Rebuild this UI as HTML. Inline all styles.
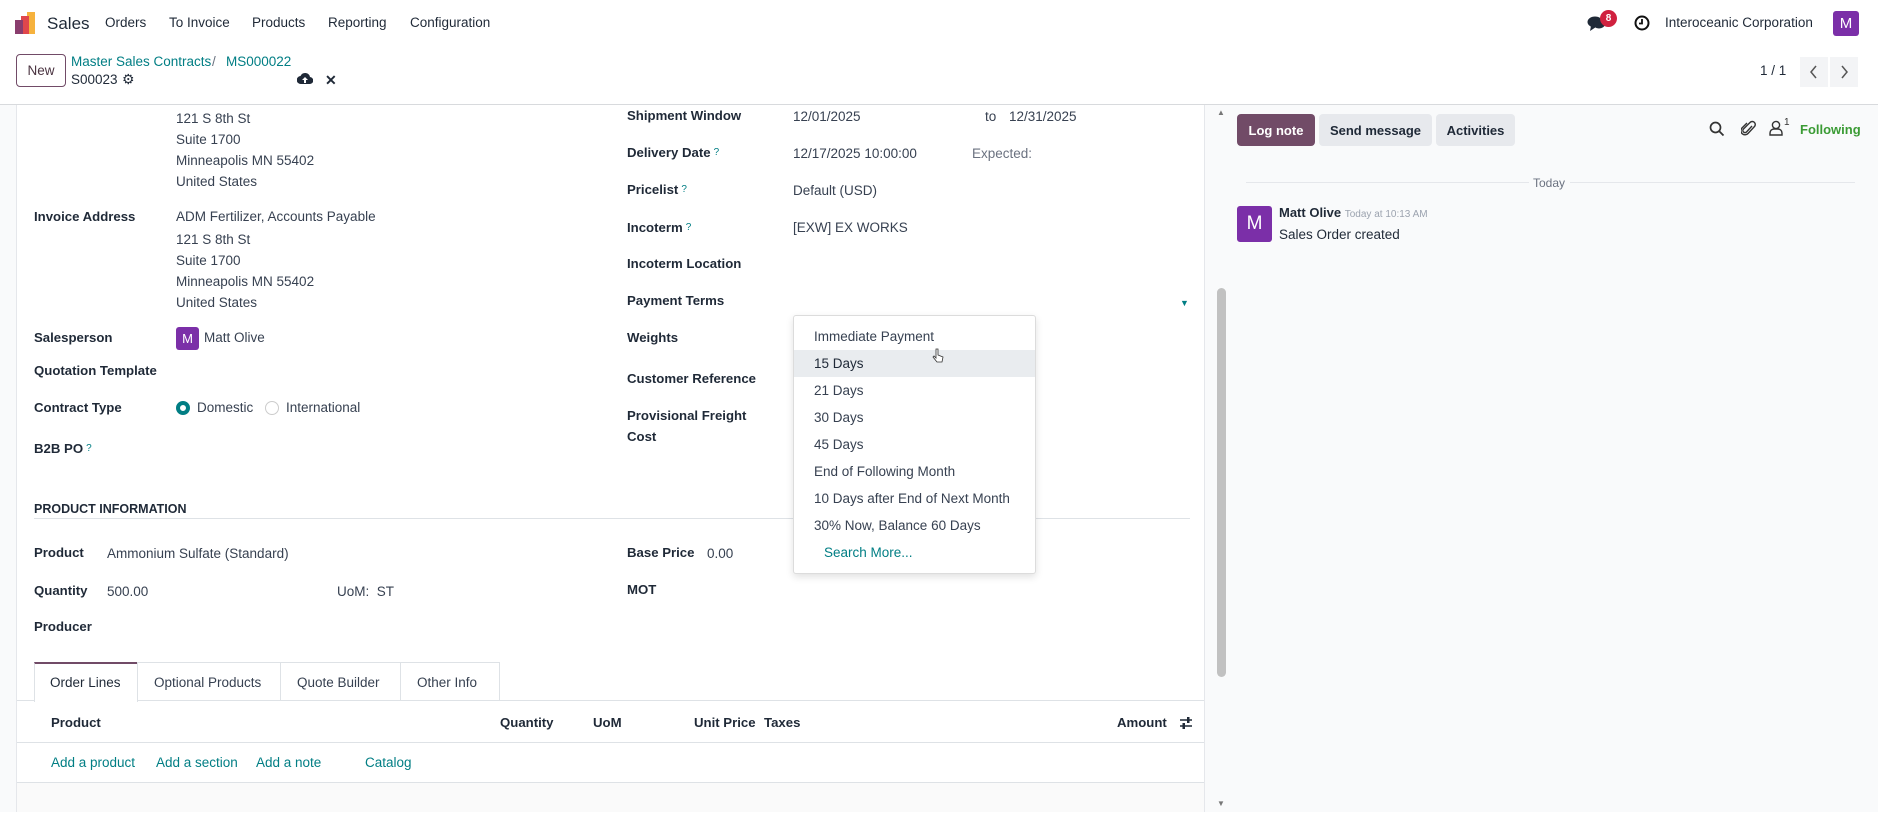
<!DOCTYPE html>
<html><head><meta charset="utf-8"><style>
*{margin:0;padding:0;box-sizing:border-box}
body{width:1878px;height:812px;overflow:hidden;background:#fff;font-family:"Liberation Sans",sans-serif;font-size:13.5px;color:#374151;position:relative}
.t{position:absolute;white-space:nowrap;line-height:18px;transform:translateY(-50%)}
.b{font-weight:bold;color:#1f2937;font-size:13.2px}
.l{color:#017e84}
.q{font-size:10px;color:#017e84;vertical-align:top;margin-left:3px;font-weight:normal}
.abs{position:absolute}
.btn{position:absolute;border-radius:4px;font-size:13.5px;display:flex;align-items:center;justify-content:center}
</style></head><body>
<!-- navbar -->
<svg class="abs" style="left:14px;top:12px" width="22" height="23" viewBox="0 0 22 23"><rect x="13" y="0" width="8" height="22" fill="#f6b23d"/><rect x="7" y="4" width="8" height="18" fill="#e0474c"/><rect x="1" y="8" width="8" height="14" fill="#8a3d6e"/></svg>
<div class="t" style="left:47px;top:24px;font-size:17px;color:#1f2937">Sales</div>
<div class="t" style="left:105px;top:23px;color:#1f2937">Orders</div>
<div class="t" style="left:169px;top:23px;color:#1f2937">To Invoice</div>
<div class="t" style="left:252px;top:23px;color:#1f2937">Products</div>
<div class="t" style="left:328px;top:23px;color:#1f2937">Reporting</div>
<div class="t" style="left:410px;top:23px;color:#1f2937">Configuration</div>
<svg class="abs" style="left:1587px;top:14px" width="20" height="18" viewBox="0 0 20 18"><ellipse cx="8" cy="8" rx="7.5" ry="5.5" fill="#1f2937"/><path d="M4 12 L3 17 L9 13Z" fill="#1f2937"/><ellipse cx="12" cy="10" rx="6" ry="4.5" fill="#1f2937"/></svg>
<div class="abs" style="left:1600px;top:10px;width:17px;height:17px;border-radius:50%;background:#d0213f;color:#fff;font-size:10px;font-weight:bold;text-align:center;line-height:17px">8</div>
<svg class="abs" style="left:1634px;top:15px" width="16" height="16" viewBox="0 0 16 16"><circle cx="8" cy="8" r="6.5" fill="none" stroke="#111" stroke-width="2"/><path d="M8 4v4.5h-3" fill="none" stroke="#111" stroke-width="1.8"/></svg>
<div class="t" style="left:1665px;top:23px;color:#1f2937">Interoceanic Corporation</div>
<div class="abs" style="left:1833px;top:11px;width:26px;height:25px;background:#7b2fa8;border-radius:3px;color:#fff;text-align:center;line-height:25px;font-size:15px">M</div>
<!-- control panel -->
<div class="btn" style="left:16px;top:54px;width:50px;height:33px;border:1px solid #714b67;color:#4a3340">New</div>
<div class="t l" style="left:71px;top:62px">Master Sales Contracts</div>
<div class="t" style="left:212px;top:62px;color:#6b7280">/</div>
<div class="t l" style="left:226px;top:62px">MS000022</div>
<div class="t" style="left:71px;top:80px;color:#1f2937">S00023</div>
<div class="t" style="left:122px;top:79px;font-size:14px;color:#1f2937">⚙</div>
<svg class="abs" style="left:297px;top:72px" width="16" height="13" viewBox="0 0 16 13"><path d="M4 12 a4 4 0 0 1 -0.5-8 a5 5 0 0 1 9.5 1 a3.5 3.5 0 0 1 -0.5 7Z" fill="#1f2937"/><path d="M8 5 l-3 3h2v3h2v-3h2Z" fill="#fff"/></svg>
<div class="t" style="left:325px;top:80px;font-size:14px;font-weight:bold;color:#1f2937">✕</div>
<div class="t" style="left:1760px;top:71px;color:#1f2937">1 / 1</div>
<div class="abs" style="left:1800px;top:57px;width:28px;height:30px;background:#f3f4f6"></div>
<div class="abs" style="left:1830px;top:57px;width:28px;height:30px;background:#f3f4f6"></div>
<svg class="abs" style="left:1808px;top:64px" width="12" height="16"><path d="M8 2 L3 8 L8 14" fill="none" stroke="#555" stroke-width="1.5"/></svg>
<svg class="abs" style="left:1838px;top:64px" width="12" height="16"><path d="M4 2 L9 8 L4 14" fill="none" stroke="#555" stroke-width="1.5"/></svg>
<div class="abs" style="left:0;top:104px;width:1878px;height:1px;background:#d8dadd"></div>
<!-- form area bg -->
<div class="abs" style="left:0;top:105px;width:17px;height:707px;background:#f9fafb"></div>
<div class="abs" style="left:16px;top:105px;width:1px;height:707px;background:#e5e7eb"></div>
<div class="abs" style="left:1204px;top:105px;width:1px;height:707px;background:#e5e7eb"></div>
<div class="abs" style="left:1205px;top:105px;width:673px;height:707px;background:#f9fafb"></div>
<!-- scrollbar -->
<div class="abs" style="left:1217px;top:288px;width:9px;height:389px;background:#c1c1c1;border-radius:5px"></div>
<div class="t" style="left:1217px;top:113px;font-size:8px;color:#777">▲</div>
<div class="t" style="left:1217px;top:804px;font-size:8px;color:#777">▼</div>
<!-- left column -->
<div class="t" style="left:176px;top:119px">121 S 8th St</div>
<div class="t" style="left:176px;top:140px">Suite 1700</div>
<div class="t" style="left:176px;top:161px">Minneapolis MN 55402</div>
<div class="t" style="left:176px;top:182px">United States</div>
<div class="t b" style="left:34px;top:217px">Invoice Address</div>
<div class="t" style="left:176px;top:217px">ADM Fertilizer, Accounts Payable</div>
<div class="t" style="left:176px;top:240px">121 S 8th St</div>
<div class="t" style="left:176px;top:261px">Suite 1700</div>
<div class="t" style="left:176px;top:282px">Minneapolis MN 55402</div>
<div class="t" style="left:176px;top:303px">United States</div>
<div class="t b" style="left:34px;top:338px">Salesperson</div>
<div class="abs" style="left:176px;top:327px;width:23px;height:23px;background:#7b2fa8;border-radius:3px;color:#fff;text-align:center;line-height:23px;font-size:13px">M</div>
<div class="t" style="left:204px;top:338px">Matt Olive</div>
<div class="t b" style="left:34px;top:371px">Quotation Template</div>
<div class="t b" style="left:34px;top:408px">Contract Type</div>
<div class="abs" style="left:176px;top:401px;width:14px;height:14px;border-radius:50%;border:4px solid #017e84;background:#fff"></div>
<div class="t" style="left:197px;top:408px">Domestic</div>
<div class="abs" style="left:265px;top:401px;width:14px;height:14px;border-radius:50%;border:1px solid #ccc;background:#fff"></div>
<div class="t" style="left:286px;top:408px">International</div>
<div class="t b" style="left:34px;top:449px">B2B PO<span class="q">?</span></div>
<!-- right column -->
<div class="t b" style="left:627px;top:116px">Shipment Window</div>
<div class="t" style="left:793px;top:117px">12/01/2025</div>
<div class="t" style="left:985px;top:117px">to</div>
<div class="t" style="left:1009px;top:117px">12/31/2025</div>
<div class="t b" style="left:627px;top:153px">Delivery Date<span class="q">?</span></div>
<div class="t" style="left:793px;top:154px">12/17/2025 10:00:00</div>
<div class="t" style="left:972px;top:154px;color:#6b7280">Expected:</div>
<div class="t b" style="left:627px;top:190px">Pricelist<span class="q">?</span></div>
<div class="t" style="left:793px;top:191px">Default (USD)</div>
<div class="t b" style="left:627px;top:228px">Incoterm<span class="q">?</span></div>
<div class="t" style="left:793px;top:228px">[EXW] EX WORKS</div>
<div class="t b" style="left:627px;top:264px">Incoterm Location</div>
<div class="t b" style="left:627px;top:301px">Payment Terms</div>
<div class="t" style="left:1180px;top:303px;font-size:9px;color:#017e84">▼</div>
<div class="t b" style="left:627px;top:338px">Weights</div>
<div class="t b" style="left:627px;top:379px">Customer Reference</div>
<div class="t b" style="left:627px;top:416px">Provisional Freight</div>
<div class="t b" style="left:627px;top:437px">Cost</div>
<!-- product info -->
<div class="t b" style="left:34px;top:509px;font-size:12.5px">PRODUCT INFORMATION</div>
<div class="abs" style="left:34px;top:518px;width:1156px;height:1px;background:#dee2e6"></div>
<div class="t b" style="left:34px;top:553px">Product</div>
<div class="t" style="left:107px;top:554px">Ammonium Sulfate (Standard)</div>
<div class="t b" style="left:627px;top:553px">Base Price</div>
<div class="t" style="left:707px;top:554px">0.00</div>
<div class="t b" style="left:34px;top:591px">Quantity</div>
<div class="t" style="left:107px;top:592px">500.00</div>
<div class="t" style="left:337px;top:592px">UoM:&nbsp; ST</div>
<div class="t b" style="left:627px;top:590px">MOT</div>
<div class="t b" style="left:34px;top:627px">Producer</div>
<!-- tabs -->
<div class="abs" style="left:17px;top:700px;width:1187px;height:1px;background:#dee2e6"></div>
<div class="abs" style="left:34px;top:662px;width:104px;height:40px;border:1px solid #dee2e6;border-top:2px solid #714b67;border-bottom:none;background:#fff"></div>
<div class="abs" style="left:137px;top:662px;width:363px;height:39px;border:1px solid #dee2e6;border-bottom:none"></div>
<div class="abs" style="left:280px;top:662px;width:1px;height:39px;background:#dee2e6"></div>
<div class="abs" style="left:400px;top:662px;width:1px;height:39px;background:#dee2e6"></div>
<div class="t" style="left:50px;top:683px;color:#1f2937">Order Lines</div>
<div class="t" style="left:154px;top:683px">Optional Products</div>
<div class="t" style="left:297px;top:683px">Quote Builder</div>
<div class="t" style="left:417px;top:683px">Other Info</div>
<div class="t b" style="left:51px;top:723px">Product</div>
<div class="t b" style="left:500px;top:723px">Quantity</div>
<div class="t b" style="left:593px;top:723px">UoM</div>
<div class="t b" style="left:694px;top:723px">Unit Price</div>
<div class="t b" style="left:764px;top:723px">Taxes</div>
<div class="t b" style="left:1117px;top:723px">Amount</div>
<svg class="abs" style="left:1179px;top:715px" width="14" height="16" viewBox="0 0 14 16"><path d="M1 5h12M1 11h12" stroke="#1f2937" stroke-width="1.6"/><rect x="8" y="2" width="2.5" height="6" fill="#1f2937"/><rect x="3.5" y="8" width="2.5" height="6" fill="#1f2937"/></svg>
<div class="abs" style="left:17px;top:742px;width:1187px;height:1px;background:#dee2e6"></div>
<div class="t l" style="left:51px;top:763px">Add a product</div>
<div class="t l" style="left:156px;top:763px">Add a section</div>
<div class="t l" style="left:256px;top:763px">Add a note</div>
<div class="t l" style="left:365px;top:763px">Catalog</div>
<div class="abs" style="left:17px;top:782px;width:1187px;height:1px;background:#dee2e6"></div>
<div class="abs" style="left:17px;top:783px;width:1187px;height:29px;background:#fafafa"></div>
<!-- dropdown -->
<div class="abs" style="left:793px;top:315px;width:243px;height:259px;background:#fff;border:1px solid #dcdcdc;border-radius:3px;box-shadow:0 3px 8px rgba(0,0,0,.12)"></div>
<div class="abs" style="left:794px;top:350px;width:241px;height:27px;background:#e9ecef"></div>
<div class="t" style="left:814px;top:337px">Immediate Payment</div>
<div class="t" style="left:814px;top:364px;color:#1f2937">15 Days</div>
<div class="t" style="left:814px;top:391px">21 Days</div>
<div class="t" style="left:814px;top:418px">30 Days</div>
<div class="t" style="left:814px;top:445px">45 Days</div>
<div class="t" style="left:814px;top:472px">End of Following Month</div>
<div class="t" style="left:814px;top:499px">10 Days after End of Next Month</div>
<div class="t" style="left:814px;top:526px">30% Now, Balance 60 Days</div>
<div class="t l" style="left:824px;top:553px">Search More...</div>
<svg class="abs" style="left:932px;top:348px" width="12" height="16" viewBox="0 0 12 16"><path d="M4 1v9l-2-2-1 1 4 5h5l1-5-5-2V1Z" fill="#fff" stroke="#333" stroke-width="0.8"/></svg>
<!-- chatter -->
<div class="btn" style="left:1237px;top:114px;width:78px;height:32px;background:#714b67;color:#fff;font-weight:bold;font-size:13px">Log note</div>
<div class="btn" style="left:1319px;top:114px;width:113px;height:32px;background:#e7e9ed;color:#1f2937;font-weight:bold;font-size:13px">Send message</div>
<div class="btn" style="left:1436px;top:114px;width:79px;height:32px;background:#e7e9ed;color:#1f2937;font-weight:bold;font-size:13px">Activities</div>
<svg class="abs" style="left:1709px;top:121px" width="16" height="16" viewBox="0 0 16 16"><circle cx="6.5" cy="6.5" r="5" fill="none" stroke="#333" stroke-width="1.7"/><path d="M10 10l4.5 4.5" stroke="#333" stroke-width="1.8"/></svg>
<svg class="abs" style="left:1741px;top:120px" width="15" height="17" viewBox="0 0 15 17"><path d="M11 6 L5.5 12 a2 2 0 0 1 -3 -3 L9 2.5 a3 3 0 0 1 4.5 4 L7 13.5 a4 4 0 0 1 -6 -5.5 L6 3" fill="none" stroke="#333" stroke-width="1.4"/></svg>
<svg class="abs" style="left:1769px;top:120px" width="14" height="16" viewBox="0 0 14 16"><circle cx="7" cy="5" r="3.6" fill="none" stroke="#333" stroke-width="1.4"/><path d="M1 15 v-2 a4 4 0 0 1 4 -4 h4 a4 4 0 0 1 4 4 v2Z" fill="none" stroke="#333" stroke-width="1.4"/></svg>
<div class="t" style="left:1784px;top:123px;font-size:10px;color:#333">1</div>
<div class="t" style="left:1800px;top:130px;font-weight:bold;color:#3a9b34;font-size:13px">Following</div>
<div class="abs" style="left:1246px;top:182px;width:283px;height:1px;background:#e5e7eb"></div>
<div class="abs" style="left:1570px;top:182px;width:285px;height:1px;background:#e5e7eb"></div>
<div class="t" style="left:1533px;top:183px;font-size:12px;color:#6b7280">Today</div>
<div class="abs" style="left:1237px;top:206px;width:35px;height:36px;background:#7b2fa8;border-radius:3px;color:#fff;text-align:center;line-height:36px;font-size:19px">M</div>
<div class="t" style="left:1279px;top:214px;font-weight:bold;color:#1f2937;font-size:13px">Matt Olive <span style="font-weight:normal;font-size:10px;color:#9ca3af">Today at 10:13 AM</span></div>
<div class="t" style="left:1279px;top:235px;color:#1f2937">Sales Order created</div>
</body></html>
